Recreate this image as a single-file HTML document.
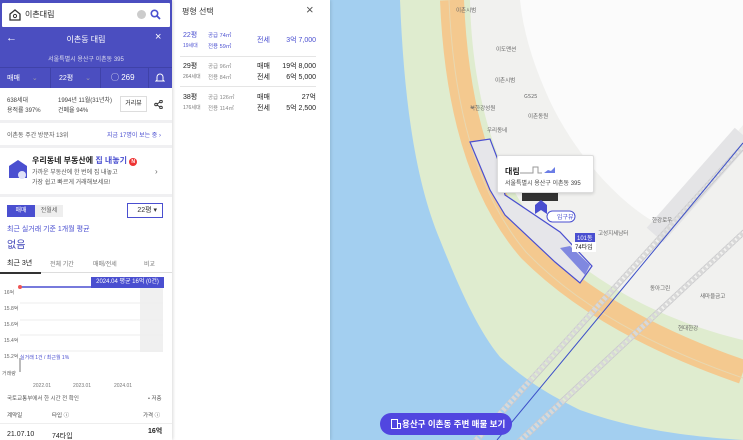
<!DOCTYPE html>
<html><head><meta charset="utf-8">
<style>
*{margin:0;padding:0;box-sizing:border-box}
body{width:743px;height:440px;overflow:hidden;position:relative;font-family:"Liberation Sans","Noto Sans CJK KR",sans-serif;background:#f2f2f0;color:#222}
.a{position:absolute;white-space:nowrap}
#lp{position:absolute;left:0;top:0;width:172px;height:440px;background:#fff;overflow:hidden;box-shadow:1px 0 3px rgba(0,0,0,.15);z-index:3}
#mp{position:absolute;left:172px;top:0;width:158px;height:440px;background:#fff;z-index:2;box-shadow:1px 0 3px rgba(0,0,0,.12)}
.gd{position:absolute;left:0;width:172px;background:#f0f0f2}
.s7{font-size:7px}.s6{font-size:6px}.s8{font-size:8px}
.bl{color:#4a4fd0}
</style></head><body>
<svg style="position:absolute;left:0;top:0" width="743" height="440">
<rect x="330" y="0" width="413" height="440" fill="#f1f1ef"/>
<path d="M520 0 H743 V125 L660 225 C620 205 570 150 545 90 C532 60 523 30 520 0Z" fill="#fbfbfb"/>
<path d="M743 135 L655 235" stroke="#e4e4e6" stroke-width="22"/>
<path d="M430 0 H470 C472 100 500 190 550 240 C600 285 660 320 743 340 V440 H330 V0Z" fill="#dfeccf"/>
<path d="M330 0 H400 C404 100 415 180 440 240 C460 290 478 330 500 357 C530 385 560 400 580 410 C630 428 680 436 743 440 H330 Z" fill="#a3cff0"/>
<path d="M452 0 C456 100 478 190 530 250 C580 300 650 340 743 372" stroke="#f4c98f" stroke-width="24" fill="none"/>
<path d="M449 0 C453 100 474 190 526 252 C576 304 650 346 743 378" stroke="#e8d7b0" stroke-width="1" fill="none"/>
<g stroke="#c9c9cc" stroke-width="1" fill="none"><path d="M473 440 L743 143M480 440 L743 150M517 440 L743 230M525 440 L743 236"/></g>
<path d="M476 440 L743 146" stroke="#d8d8d8" stroke-width="5" stroke-dasharray="3 2" fill="none"/>
<path d="M521 440 L743 233" stroke="#d8d8d8" stroke-width="5" stroke-dasharray="3 2" fill="none"/>
<path d="M497 440 L743 143" stroke="#3c4fc8" stroke-width="1" fill="none"/>
<path d="M470 142 L490 139 L498 160 L505 195 L560 232 L592 266 L580 283 L555 262 L505 215 L490 190 Z" fill="#e6e6ea" stroke="#4a4fd0" stroke-width="1.2"/>
<path d="M560 248 L570 246 L590 265 L585 275 Z" fill="#8088e0"/>
<rect x="575" y="233" width="20" height="9" fill="#4a4fd0"/>
<text x="577" y="240" font-size="6" fill="#fff" font-family="Liberation Sans">101동</text>
<rect x="572" y="242" width="24" height="10" fill="#fff"/>
<text x="575" y="249" font-size="6" fill="#222" font-family="Liberation Sans">74타입</text>
<rect x="522" y="193" width="36" height="8" fill="#333"/>
<path d="M535 205 l6-5 l6 5 v9 l-6-4 l-6 4z" fill="#4a4fd0"/>
<rect x="547" y="211" width="28" height="11" rx="5.5" fill="#fff" stroke="#4a4fd0"/>
<text x="557" y="219" font-size="6" fill="#4a4fd0" font-family="Noto Sans CJK KR">입구뷰</text>
<g font-size="5.5" fill="#666" font-family="Noto Sans CJK KR">
<text x="456" y="12">이촌시범</text><text x="496" y="51">이도맨션</text><text x="495" y="82">이촌시범</text><text x="470" y="110">북한강성원</text><text x="524" y="98">GS25</text><text x="528" y="118">이촌동원</text><text x="487" y="132">우리동네</text><text x="598" y="235">고성지세남터</text><text x="652" y="222">한강로우</text><text x="650" y="290">동아그린</text><text x="700" y="298">새마을금고</text><text x="678" y="330">현대한강</text></g>
</svg>
<div class="a" style="left:380px;top:413px;width:132px;height:22px;border-radius:11px;background:#5146e0;color:#fff;font-size:8.5px;font-weight:bold;line-height:22px;padding-left:22px">용산구 이촌동 주변 매물 보기</div>
<svg class="a" style="left:391px;top:419px" width="10" height="10"><rect x="0.5" y="0.5" width="6" height="9" fill="none" stroke="#fff"/><rect x="6.5" y="4.5" width="3" height="5" fill="none" stroke="#fff"/></svg>
<div class="a" style="left:497px;top:155px;width:97px;height:38px;background:#fff;border:1px solid #ddd;border-radius:2px;box-shadow:0 1px 3px rgba(0,0,0,.15)">
<div class="a s8" style="left:7px;top:10px;font-weight:bold">대림</div>
<svg class="a" style="left:22px;top:8px" width="36" height="10"><path d="M0 9H13V3H18V9H22" stroke="#999" fill="none"/><path d="M24 9 l4-3 3 1 4-4v6z" fill="#6b7de6"/></svg>
<div class="a s6" style="left:7px;top:22px;color:#444">서울특별시 용산구 이촌동 395</div></div>

<div id="lp">
<div class="a" style="left:0;top:0;width:172px;height:88px;background:#4b4ec0"></div>
<div class="a" style="left:2px;top:3px;width:168px;height:24px;background:#fff;border-radius:1px"></div>
<svg class="a" style="left:9px;top:9px" width="12" height="12"><path d="M1 5L6 1 11 5V11H1Z" fill="none" stroke="#333" stroke-width="1.3"/><circle cx="6" cy="7" r="1.6" fill="none" stroke="#333"/></svg>
<div class="a s8" style="left:25px;top:9px;color:#222">이촌대림</div>
<div class="a" style="left:137px;top:10px;width:9px;height:9px;border-radius:50%;background:#ccc"></div>
<svg class="a" style="left:150px;top:9px" width="11" height="11"><circle cx="4.5" cy="4.5" r="3.2" fill="none" stroke="#4a4fd0" stroke-width="1.6"/><path d="M7 7l3 3" stroke="#4a4fd0" stroke-width="1.8"/></svg>
<div class="a" style="left:6px;top:32px;color:#fff;font-size:11px">←</div>
<div class="a s8" style="left:0;width:172px;text-align:center;top:34px;color:#fff">이촌동 대림</div>
<div class="a" style="left:155px;top:31px;color:#fff;font-size:11px">×</div>
<div class="a s6" style="left:0;width:172px;text-align:center;top:54px;color:#dde">서울특별시 용산구 이촌동 395</div>
<div class="a" style="left:0;top:67px;width:172px;height:1px;background:#3f42a8"></div>
<div class="a" style="left:50px;top:68px;width:1px;height:20px;background:#3f42a8"></div>
<div class="a" style="left:100px;top:68px;width:1px;height:20px;background:#3f42a8"></div>
<div class="a" style="left:148px;top:68px;width:1px;height:20px;background:#3f42a8"></div>
<div class="a s7" style="left:7px;top:73px;color:#fff">매매 <span style="color:#99a;margin-left:10px">⌄</span></div>
<div class="a s7" style="left:59px;top:73px;color:#fff">22평 <span style="color:#99a;margin-left:10px">⌄</span></div>
<div class="a s8" style="left:111px;top:72px;color:#fff">◯ 269</div>
<svg class="a" style="left:155px;top:72px" width="10" height="11"><path d="M2 8V5a3 3 0 0 1 6 0v3l1 1H1z" fill="none" stroke="#fff"/></svg>
<div class="a s6" style="left:7px;top:96px;color:#444;line-height:10px">638세대<br>용적률 397%</div>
<div class="a s6" style="left:58px;top:96px;color:#444;line-height:10px">1994년 11월(31년차)<br>건폐율 94%</div>
<div class="a s6" style="left:120px;top:96px;width:27px;height:16px;border:1px solid #ddd;text-align:center;line-height:14px">거리뷰</div>
<svg class="a" style="left:154px;top:100px" width="9" height="9"><circle cx="7" cy="1.5" r="1.3" fill="none" stroke="#333"/><circle cx="2" cy="4.5" r="1.3" fill="none" stroke="#333"/><circle cx="7" cy="7.5" r="1.3" fill="none" stroke="#333"/><path d="M3 4L6 2M3 5L6 7" stroke="#333"/></svg>
<div class="gd" style="top:120px;height:3px"></div>
<div class="a s6" style="left:7px;top:130px;color:#555">이촌동 주간 방문자 13위</div>
<div class="a s6 bl" style="left:107px;top:130px">지금 17명이 보는 중 ›</div>
<div class="gd" style="top:145px;height:3px"></div>
<svg class="a" style="left:9px;top:160px" width="18" height="20"><path d="M0 6L9 0 18 6V18H0Z" fill="#4a4fd0"/><circle cx="13" cy="15" r="4" fill="#dfe1f8"/></svg>
<div class="a s8" style="left:32px;top:155px;font-weight:bold">우리동네 부동산에 <span class="bl">집 내놓기</span> <span style="display:inline-block;width:8px;height:8px;border-radius:50%;background:#e33;color:#fff;font-size:5px;text-align:center;line-height:8px">N</span></div>
<div class="a s6" style="left:32px;top:168px;color:#555;line-height:10px">가까운 부동산에 한 번에 집 내놓고<br>가장 쉽고 빠르게 거래해보세요!</div>
<div class="a s8" style="left:155px;top:167px;color:#666">›</div>
<div class="gd" style="top:194px;height:3px"></div>
<div class="a s6" style="left:7px;top:205px;width:28px;height:12px;background:#4a4fd0;color:#fff;text-align:center;line-height:12px">매매</div>
<div class="a s6" style="left:35px;top:205px;width:28px;height:12px;background:#eee;color:#666;text-align:center;line-height:12px">전월세</div>
<div class="a s7" style="left:127px;top:203px;width:36px;height:15px;border:1px solid #4a4fd0;text-align:right;padding-right:5px;line-height:13px;color:#333">22평 ▾</div>
<div class="a s7 bl" style="left:7px;top:224px">최근 실거래 기준 1개월 평균</div>
<div class="a bl" style="left:7px;top:236px;font-size:10px;color:#3f44b8">없음</div>
<div class="a s7" style="left:7px;top:258px">최근 3년</div>
<div class="a s6" style="left:50px;top:259px;color:#777">전체 기간</div>
<div class="a s6" style="left:93px;top:259px;color:#777">매매/전세</div>
<div class="a s6" style="left:144px;top:259px;color:#777">비교</div>
<div class="a" style="left:0;top:272px;width:172px;height:1px;background:#ddd"></div>
<div class="a" style="left:0;top:272px;width:41px;height:2px;background:#333"></div>
<div class="a" style="left:140px;top:288px;width:23px;height:64px;background:#f0f0f0"></div>
<svg class="a" style="left:0;top:276px" width="172" height="100">
<g stroke="#eee"><path d="M20 27H163M20 44H163M20 59H163M20 75H163"/></g>
<path d="M20 11H140" stroke="#4a4fd0" stroke-width="1.5"/>
<circle cx="20" cy="11" r="2" fill="#e55"/>
<rect x="19" y="82" width="2" height="14" fill="#bbb"/>
</svg>
<div class="a" style="left:91px;top:277px;width:73px;height:11px;background:#4a4fd0;color:#fff;font-size:6px;text-align:center;line-height:11px">2024.04 평균 16억 (0건)</div>
<div class="a" style="font-size:5px;color:#666;left:4px;top:285px;line-height:16px">16억<br>15.8억<br>15.6억<br>15.4억<br>15.2억</div>
<div class="a bl" style="font-size:5px;left:20px;top:354px">실거래 1건 / 최근월 1%</div>
<div class="a" style="font-size:5px;color:#666;left:2px;top:370px">거래량</div>
<div class="a" style="font-size:5px;color:#777;left:33px;top:383px">2022.01</div>
<div class="a" style="font-size:5px;color:#777;left:73px;top:383px">2023.01</div>
<div class="a" style="font-size:5px;color:#777;left:114px;top:383px">2024.01</div>
<div class="a" style="font-size:5.5px;color:#555;left:7px;top:394px">국토교통부에서 한 시간 전 확인</div>
<div class="a" style="font-size:5.5px;color:#555;left:148px;top:394px">• 저층</div>
<div class="a" style="font-size:5.5px;color:#444;left:7px;top:411px">계약일</div>
<div class="a" style="font-size:5.5px;color:#444;left:52px;top:411px">타입 ⓘ</div>
<div class="a" style="font-size:5.5px;color:#444;left:143px;top:411px">가격 ⓘ</div>
<div class="a" style="left:0;top:423px;width:172px;height:1px;background:#eee"></div>
<div class="a s7" style="left:7px;top:431px">21.07.10</div>
<div class="a s7" style="left:52px;top:431px">74타입</div>
<div class="a s7" style="left:148px;top:426px;font-weight:bold">16억</div>
</div>

<div id="mp">
<div class="a s8" style="left:10px;top:6px;color:#333">평형 선택</div>
<div class="a" style="left:134px;top:2px;font-size:13px;color:#555">×</div>
<div class="a s7 bl" style="left:11px;top:30px">22평</div>
<div class="a bl" style="font-size:5px;left:11px;top:42px">19세대</div>
<div class="a bl" style="font-size:5.5px;left:36px;top:31px">공급 74㎡</div>
<div class="a bl" style="font-size:5.5px;left:36px;top:42px">전용 59㎡</div>
<div class="a s7 bl" style="left:85px;top:35px">전세</div>
<div class="a s7 bl" style="left:100px;top:35px;width:44px;text-align:right">3억 7,000</div>
<div class="a" style="left:8px;top:56px;width:136px;height:1px;background:#e5e5e5"></div>
<div class="a s7" style="left:11px;top:61px">29평</div>
<div class="a" style="font-size:5px;color:#777;left:11px;top:73px">264세대</div>
<div class="a" style="font-size:5.5px;color:#888;left:36px;top:62px">공급 96㎡</div>
<div class="a" style="font-size:5.5px;color:#888;left:36px;top:73px">전용 84㎡</div>
<div class="a s7" style="left:85px;top:61px;line-height:11px">매매<br>전세</div>
<div class="a s7" style="left:95px;top:61px;width:49px;text-align:right;line-height:11px">19억 8,000<br>6억 5,000</div>
<div class="a" style="left:8px;top:86px;width:136px;height:1px;background:#e5e5e5"></div>
<div class="a s7" style="left:11px;top:92px">38평</div>
<div class="a" style="font-size:5px;color:#777;left:11px;top:104px">176세대</div>
<div class="a" style="font-size:5.5px;color:#888;left:36px;top:93px">공급 126㎡</div>
<div class="a" style="font-size:5.5px;color:#888;left:36px;top:104px">전용 114㎡</div>
<div class="a s7" style="left:85px;top:92px;line-height:11px">매매<br>전세</div>
<div class="a s7" style="left:95px;top:92px;width:49px;text-align:right;line-height:11px">27억<br>5억 2,500</div>
</div>
</body></html>
